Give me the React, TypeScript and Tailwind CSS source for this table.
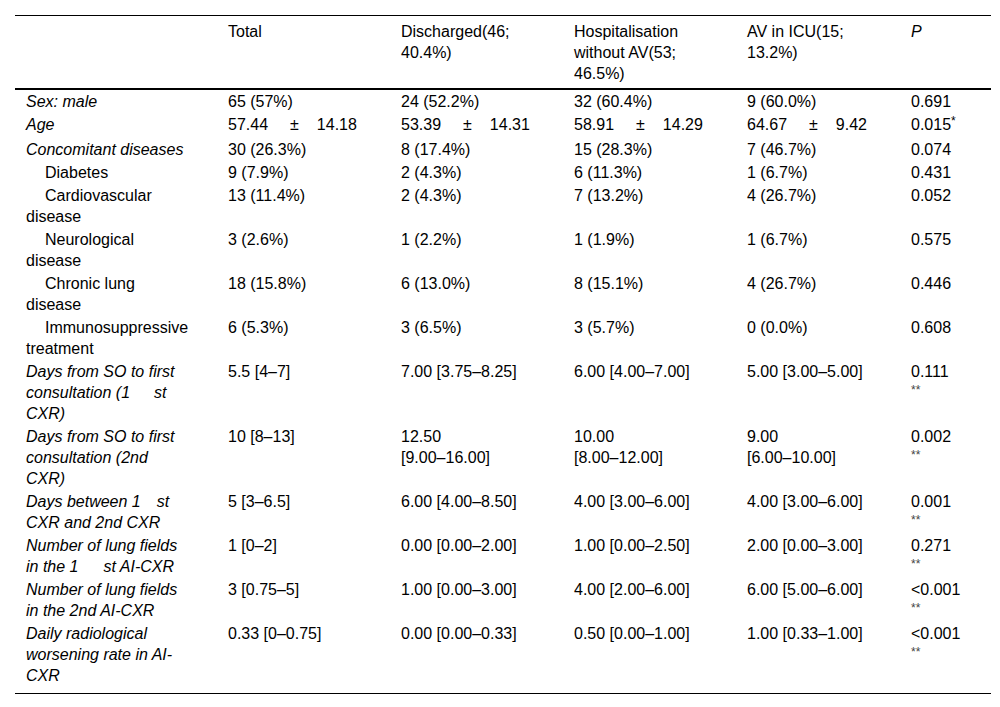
import React from "react";

const GRID = "grid grid-cols-[203px_173px_173px_173px_164px_90px]";
const C0 = "pl-[11px] pr-[29px] py-[1px]";
const CN = "pl-[10px] pr-[38px] py-[1px]";
const CA = "pl-[10px] pr-[36px] py-[1px]";
const CP = "pl-[10px] pr-[20px] py-[1px]";

type Row = {
  label: React.ReactNode;
  italic?: boolean;
  sub?: boolean;
  cells: React.ReactNode[];
  p: React.ReactNode;
  stars?: boolean;
};

const PM = ({ a, b }: { a: string; b: string }) => (
  <span className="whitespace-nowrap">
    {a}
    <span className="ml-[22px]">±</span>
    <span className="ml-[18px]">{b}</span>
  </span>
);

function Val({ v }: { v: React.ReactNode }) {
  if (typeof v === "string" && v.includes(" [")) {
    const i = v.indexOf(" [");
    return (
      <>
        <span className="whitespace-nowrap">{v.slice(0, i)}</span>{" "}
        <span className="whitespace-nowrap">{v.slice(i + 1)}</span>
      </>
    );
  }
  return <>{v}</>;
}

const rows: Row[] = [
  { label: "Sex: male", italic: true, cells: ["65 (57%)", "24 (52.2%)", "32 (60.4%)", "9 (60.0%)"], p: "0.691" },
  {
    label: "Age",
    italic: true,
    cells: [
      <PM a="57.44" b="14.18" />,
      <PM a="53.39" b="14.31" />,
      <PM a="58.91" b="14.29" />,
      <PM a="64.67" b="9.42" />,
    ],
    p: (
      <span>
        0.015<span className="relative -top-[5px] text-[12px]">*</span>
      </span>
    ),
  },
  { label: "Concomitant diseases", italic: true, cells: ["30 (26.3%)", "8 (17.4%)", "15 (28.3%)", "7 (46.7%)"], p: "0.074" },
  { label: "Diabetes", sub: true, cells: ["9 (7.9%)", "2 (4.3%)", "6 (11.3%)", "1 (6.7%)"], p: "0.431" },
  { label: "Cardiovascular disease", sub: true, cells: ["13 (11.4%)", "2 (4.3%)", "7 (13.2%)", "4 (26.7%)"], p: "0.052" },
  { label: "Neurological disease", sub: true, cells: ["3 (2.6%)", "1 (2.2%)", "1 (1.9%)", "1 (6.7%)"], p: "0.575" },
  { label: "Chronic lung disease", sub: true, cells: ["18 (15.8%)", "6 (13.0%)", "8 (15.1%)", "4 (26.7%)"], p: "0.446" },
  { label: "Immunosuppressive treatment", sub: true, cells: ["6 (5.3%)", "3 (6.5%)", "3 (5.7%)", "0 (0.0%)"], p: "0.608" },
  {
    label: (
      <>
        Days from SO to first consultation (1<span className="ml-[24px]">st</span> CXR)
      </>
    ),
    italic: true,
    cells: ["5.5 [4–7]", "7.00 [3.75–8.25]", "6.00 [4.00–7.00]", "5.00 [3.00–5.00]"],
    p: "0.111",
    stars: true,
  },
  {
    label: "Days from SO to first consultation (2nd CXR)",
    italic: true,
    cells: ["10 [8–13]", "12.50 [9.00–16.00]", "10.00 [8.00–12.00]", "9.00 [6.00–10.00]"],
    p: "0.002",
    stars: true,
  },
  {
    label: (
      <>
        Days between 1<span className="ml-[16px]">st</span> CXR and 2nd CXR
      </>
    ),
    italic: true,
    cells: ["5 [3–6.5]", "6.00 [4.00–8.50]", "4.00 [3.00–6.00]", "4.00 [3.00–6.00]"],
    p: "0.001",
    stars: true,
  },
  {
    label: (
      <>
        Number of lung fields in the 1<span className="ml-[25px]">st</span> AI-CXR
      </>
    ),
    italic: true,
    cells: ["1 [0–2]", "0.00 [0.00–2.00]", "1.00 [0.00–2.50]", "2.00 [0.00–3.00]"],
    p: "0.271",
    stars: true,
  },
  {
    label: "Number of lung fields in the 2nd AI-CXR",
    italic: true,
    cells: ["3 [0.75–5]", "1.00 [0.00–3.00]", "4.00 [2.00–6.00]", "6.00 [5.00–6.00]"],
    p: "<0.001",
    stars: true,
  },
  {
    label: "Daily radiological worsening rate in AI-CXR",
    italic: true,
    cells: ["0.33 [0–0.75]", "0.00 [0.00–0.33]", "0.50 [0.00–1.00]", "1.00 [0.33–1.00]"],
    p: "<0.001",
    stars: true,
  },
];

export default function App() {
  return (
    <div className="min-h-[707px] w-[1000px] bg-white pl-[15px] pt-[15px] font-['Liberation_Sans',Arial,Helvetica,sans-serif] text-[16px] leading-[21px] text-black">
      <div className="w-[976px]">
        {/* header */}
        <div className={`${GRID} border-t border-b-2 border-black`}>
          <div className="pl-[11px] pt-[5px] pb-[4px]"></div>
          <div className="pl-[10px] pr-[38px] pt-[5px] pb-[4px]">Total</div>
          <div className="pl-[10px] pr-[38px] pt-[5px] pb-[4px]">Discharged(46; 40.4%)</div>
          <div className="pl-[10px] pr-[38px] pt-[5px] pb-[4px]">Hospitalisation without AV(53; 46.5%)</div>
          <div className="pl-[10px] pr-[36px] pt-[5px] pb-[4px]">AV in ICU(15; 13.2%)</div>
          <div className="pl-[10px] pr-[20px] pt-[5px] pb-[4px] italic">P</div>
        </div>
        {/* body */}
        <div className={`${GRID} border-b border-black pb-[6px]`}>
          {rows.map((r, i) => (
            <React.Fragment key={i}>
              <div className={`${C0} ${r.italic ? "italic" : ""} ${r.sub ? "indent-[19px]" : ""}`}>{r.label}</div>
              <div className={CN}><Val v={r.cells[0]} /></div>
              <div className={CN}><Val v={r.cells[1]} /></div>
              <div className={CN}><Val v={r.cells[2]} /></div>
              <div className={CA}><Val v={r.cells[3]} /></div>
              <div className={CP}>
                <div>{r.p}</div>
                {r.stars && (
                  <div className="h-[21px]">
                    <span className="relative -top-[4px] text-[12px] text-[#444]">**</span>
                  </div>
                )}
              </div>
            </React.Fragment>
          ))}
        </div>
      </div>
    </div>
  );
}
